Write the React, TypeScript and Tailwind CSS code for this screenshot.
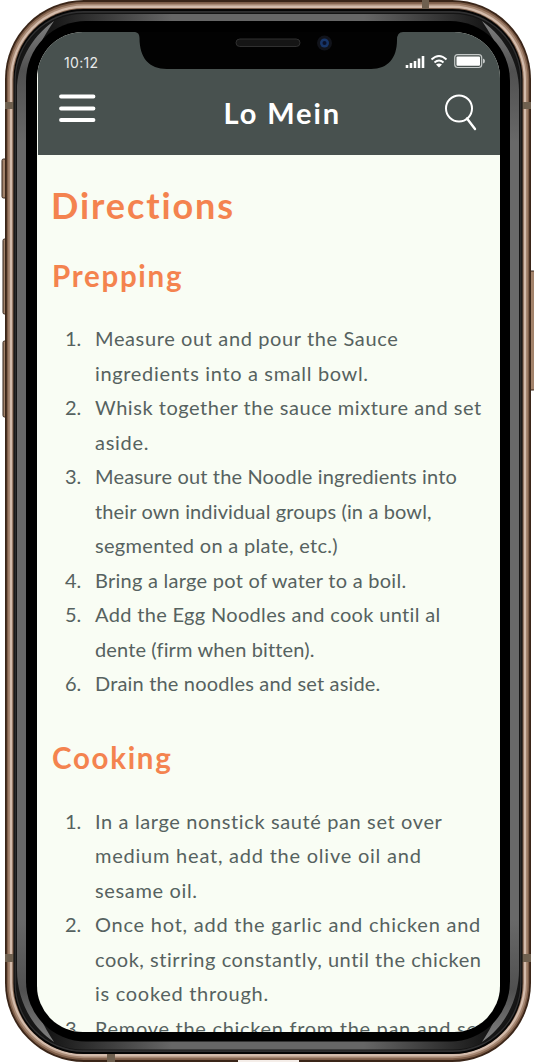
type Line = { text: string; spacing: string };
type Step = Line[];

const prepping: Step[] = [
  [
    { text: "Measure out and pour the Sauce", spacing: "tracking-[0.62px]" },
    { text: "ingredients into a small bowl.", spacing: "tracking-[0.66px]" },
  ],
  [
    { text: "Whisk together the sauce mixture and set", spacing: "tracking-[0.54px]" },
    { text: "aside.", spacing: "tracking-[0.7px]" },
  ],
  [
    { text: "Measure out the Noodle ingredients into", spacing: "tracking-[0.16px]" },
    { text: "their own individual groups (in a bowl,", spacing: "tracking-[0.13px]" },
    { text: "segmented on a plate, etc.)", spacing: "tracking-[0.31px]" },
  ],
  [{ text: "Bring a large pot of water to a boil.", spacing: "tracking-[0.26px]" }],
  [
    { text: "Add the Egg Noodles and cook until al", spacing: "tracking-[0.33px]" },
    { text: "dente (firm when bitten).", spacing: "tracking-[0.13px]" },
  ],
  [{ text: "Drain the noodles and set aside.", spacing: "tracking-[0.17px]" }],
];
const cooking: Step[] = [
  [
    { text: "In a large nonstick sauté pan set over", spacing: "tracking-[0.62px]" },
    { text: "medium heat, add the olive oil and", spacing: "tracking-[0.77px]" },
    { text: "sesame oil.", spacing: "tracking-[0.65px]" },
  ],
  [
    { text: "Once hot, add the garlic and chicken and", spacing: "tracking-[0.76px]" },
    { text: "cook, stirring constantly, until the chicken", spacing: "tracking-[0.54px]" },
    { text: "is cooked through.", spacing: "tracking-[0.71px]" },
  ],
  [{ text: "Remove the chicken from the pan and set", spacing: "tracking-[0.7px]" }],
];

function Steps({ steps }: { steps: Step[] }) {
  return (
    <ol className="text-[20px] leading-[34.5px] text-[#566260]">
      {steps.map((step, i) => (
        <li key={i} className="flex">
          <span className="w-[30px] shrink-0">{i + 1}.</span>
          <div className="flex flex-col items-start whitespace-nowrap">
            {step.map((line) => (
              <span key={line.text} className={line.spacing}>{line.text}</span>
            ))}
          </div>
        </li>
      ))}
    </ol>
  );
}

function PhoneBody() {
  return (
    <svg className="absolute inset-0" width="534" height="1064" viewBox="0 0 534 1064" fill="none">
      <defs>
        <linearGradient id="strip" x1="50" x2="486" y1="0" y2="0" gradientUnits="userSpaceOnUse">
          <stop offset="0" stopColor="#161616" />
          <stop offset=".28" stopColor="#666" />
          <stop offset=".72" stopColor="#666" />
          <stop offset="1" stopColor="#161616" />
        </linearGradient>
        <linearGradient id="edge" x1="0" x2="0" y1="20" y2="1042" gradientUnits="userSpaceOnUse">
          <stop offset="0" stopColor="#808080" />
          <stop offset=".05" stopColor="#505050" />
          <stop offset=".12" stopColor="#696969" />
          <stop offset=".88" stopColor="#696969" />
          <stop offset=".95" stopColor="#505050" />
          <stop offset="1" stopColor="#808080" />
        </linearGradient>
      </defs>
      <g fill="#a3836b" stroke="#35241a" strokeWidth="1">
        <rect x="2" y="159" width="6" height="39" rx="1.5" />
        <rect x="3" y="239" width="5" height="75" rx="1.5" />
        <rect x="3" y="341" width="5" height="76" rx="1.5" />
        <rect x="528" y="271" width="7" height="119" rx="1.5" />
      </g>
      <rect x="5" y="0" width="526" height="1062" rx="79" fill="#3a2518" />
      <rect x="6.8" y="2" width="522.4" height="1058" rx="77" fill="#7d5d48" />
      <rect x="8.3" y="3.7" width="519.4" height="1054.6" rx="75.5" fill="#a78873" />
      <rect x="10" y="5.5" width="516" height="1051" rx="74" fill="#d3bbab" />
      <rect x="12.3" y="8" width="511.4" height="1046" rx="71.5" fill="#80624e" />
      <path d="M238 1061h61" stroke="#f5eee9" strokeWidth="2" />
      <path d="M422 0h7v10h-7zM107 1053h8v9h-8zM5 102h9v7H5zM522 102h9v7h-9zM5 954h9v8H5zM522 954h9v8h-9z" fill="#6f604f" />
      <rect x="13.5" y="9" width="509" height="1045" rx="70" fill="#050505" />
      <rect x="14.5" y="11" width="507" height="1041" rx="69" fill="#303031" />
      <rect x="15.8" y="12.8" width="504.4" height="1037.4" rx="67" fill="#141414" />
      <rect x="17" y="14" width="502" height="1035.5" rx="66" fill="url(#strip)" />
      <g fill="url(#edge)">
        <path d="M17 90C17 64 30 38 54 21C40 42 26 66 26 110V950C26 994 40 1020 54 1042C30 1026 17 998 17 970z" />
        <path d="M519 90C519 64 506 38 482 21C496 42 510 66 510 110V950C510 994 496 1020 482 1042C506 1026 519 998 519 970z" />
      </g>
      <rect x="26" y="21" width="484" height="1020.5" rx="60" fill="#000" />
    </svg>
  );
}

export default function App() {
  return (
    <div className="relative h-[1064px] w-[534px] overflow-hidden bg-white pt-8 pl-[37px] font-[Lato,sans-serif]">
      <PhoneBody />
      <main className="relative h-[1000px] w-[462.5px] overflow-hidden rounded-[46px] bg-[#f9fdf4]">
        <header className="ml-px h-[123px] bg-[#48514f] text-white">
          <svg className="absolute top-0 left-0" width="463" height="38" viewBox="37 32 463 38" fill="none">
            <path d="M134 31.9Q139.5 32 139.5 38C139.5 58 149 69 167 69H371C388 69 397 58 397 40Q397 32 403 32z" fill="#020202" />
            <rect x="236" y="39" width="64" height="7.5" rx="3.75" fill="#151515" stroke="#303030" />
            <circle cx="324.5" cy="43" r="7.5" fill="#11131a" />
            <circle cx="324.5" cy="43" r="4.5" fill="#173568" />
            <circle cx="324.5" cy="43" r="2" fill="#0a1028" />
          </svg>
          <div className="flex h-[50px] items-end justify-between pr-[14px] pl-[26px]">
            <span className="pb-[9px] font-[Inter,sans-serif] text-[14px] leading-[20px] tracking-[0.3px] text-[#e8eaea]">10:12</span>
            <svg className="mb-[13px]" width="81" height="15" viewBox="405 54 81 15" fill="none">
              <path d="M407 68v-3M411 68v-5M415 68v-7M419 68v-9.5M423 68v-12" stroke="#fff" strokeWidth="2.6" />
              <path d="M431.5 59.5Q439 52.5 446.5 59.5M434.5 62.5Q439 58.5 443.5 62.5" stroke="#fff" strokeWidth="2" />
              <path d="M436 64.5Q439 62.5 442 64.5L439 67.5z" fill="#fff" />
              <rect x="454.7" y="54.7" width="27" height="12.8" rx="3" stroke="#c5c9c8" strokeWidth="1.2" />
              <rect x="456.5" y="56.5" width="23.5" height="9.2" rx="1" fill="#fff" />
              <path d="M483 58.5q2 .5 2 2.5t-2 2.5z" fill="#c5c9c8" />
            </svg>
          </div>
          <div className="flex h-[62px] items-center justify-between pr-[21px] pl-[20px]">
            <svg width="38" height="30" viewBox="58 93 38 30" className="mb-[10px]" fill="none">
              <path d="M61 96.5h32.5M61 108.500h32.5M61 120h32.5" stroke="#fff" strokeWidth="3.8" strokeLinecap="round" />
            </svg>
            <h1 className="ml-[24px] text-[29px] leading-[36px] font-bold tracking-[1.9px]">Lo Mein</h1>
            <svg width="34" height="38" viewBox="444 93 34 38" className="mb-[2px]" fill="none" stroke="#fff" strokeWidth="2">
              <circle cx="459" cy="108.5" r="13" />
              <path d="M467 118.5L475 129" strokeWidth="2.4" strokeLinecap="round" />
            </svg>
          </div>
        </header>
        <section className="pt-[26px] pl-[14px] text-[#f4834f]">
          <h2 className="text-[36px] leading-[48px] font-bold tracking-[1.9px]">Directions</h2>
          <h3 className="mt-[27px] pl-px text-[29.5px] leading-[40px] font-bold tracking-[1.7px]">Prepping</h3>
          <div className="pt-[25px] pl-[14px]"><Steps steps={prepping} /></div>
          <h3 className="mt-[37px] pl-px text-[29.5px] leading-[40px] font-bold tracking-[1.7px]">Cooking</h3>
          <div className="pt-[26px] pl-[14px]"><Steps steps={cooking} /></div>
        </section>
      </main>
    </div>
  );
}
